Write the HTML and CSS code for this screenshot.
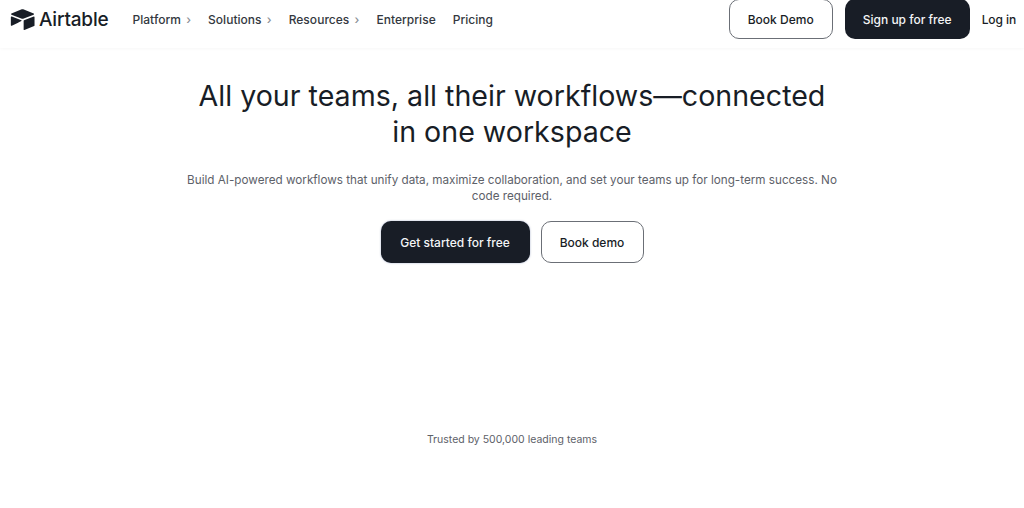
FILE: index.html
```html
<!DOCTYPE html>
<html lang="en">
<head>
    <title>Airtable</title>
    <meta charset="utf-8" />
    <link rel="stylesheet" href="styles.css">
</head>
<body>
<header class="topbar">
    <a class="logo" href="#">
        <svg class="logo-mark" viewBox="0 0 26 22" width="25" height="21">
            <path d="M11.6 0.6 1.4 4.8c-.5.2-.5.9 0 1.1l10.3 4.1c.9.4 1.8.4 2.7 0l10.3-4.1c.5-.2.5-.9 0-1.1L14.4.6c-.9-.4-1.9-.4-2.8 0z" fill="#181d26"/>
            <path d="M14.2 12.4v9c0 .4.4.7.8.5l10.2-4c.3-.1.4-.3.4-.6v-9c0-.4-.4-.7-.8-.5l-10.2 4c-.3.1-.4.3-.4.6z" fill="#181d26"/>
            <path d="M11.8 12.7 8.7 14.2l-.3.2-6.6 3.2c-.4.2-1-.1-1-.6V8.5c0-.2.1-.3.2-.4l.3-.2c.2-.1.3-.1.5 0l10 4c.5.2.5.6 0 .8z" fill="#181d26"/>
        </svg>
        <span class="logo-text">Airtable</span>
    </a>
    <nav class="nav">
        <a class="nav-link" href="#">Platform <span class="chev">›</span></a>
        <a class="nav-link" href="#">Solutions <span class="chev">›</span></a>
        <a class="nav-link" href="#">Resources <span class="chev">›</span></a>
        <a class="nav-link" href="#">Enterprise</a>
        <a class="nav-link" href="#">Pricing</a>
    </nav>
    <div class="actions">
        <a class="btn btn-light btn-top" href="#">Book Demo</a>
        <a class="btn btn-dark btn-top" href="#">Sign up for free</a>
        <a class="login" href="#">Log in</a>
    </div>
</header>

<main class="hero">
    <h1>All your teams, all their workflows—connected in one workspace</h1>
    <p class="lead">Build AI-powered workflows that unify data, maximize collaboration, and set your teams up for long-term success. No code required.</p>
    <div class="cta">
        <a class="btn btn-dark btn-big" href="#">Get started for free</a>
        <a class="btn btn-light btn-big" href="#">Book demo</a>
    </div>
    <p class="trusted">Trusted by 500,000 leading teams</p>
</main>
</body>
</html>
```

FILE: styles.css
```css
body {
    margin: 0;
    height: 508px;
    overflow: hidden;
    font-family: Inter, "Liberation Sans", sans-serif;
    background: #fff;
    color: #181d26;
}
a {
    color: inherit;
    text-decoration: none;
}

.topbar {
    display: flex;
    align-items: center;
    height: 48px;
    box-sizing: border-box;
    padding: 0 8px 10px 10px;
    background: #fff;
    box-shadow: 0 1px 3px rgba(0,0,0,0.03);
}
.logo {
    display: flex;
    align-items: center;
    gap: 4px;
}
.logo-text {
    font-size: 19px;
    font-weight: 500;
    letter-spacing: -0.2px;
}
.nav {
    display: flex;
    gap: 17px;
    margin-left: 24px;
}
.nav-link {
    font-size: 12px;
    font-weight: 500;
    letter-spacing: 0.03px;
    color: #333840;
}
.chev {
    color: #8a8e94;
    font-size: 12px;
    margin-left: 2px;
}
.actions {
    display: flex;
    align-items: center;
    margin-left: auto;
}
.login {
    font-size: 12px;
    font-weight: 500;
    letter-spacing: -0.1px;
    margin-left: 12px;
}

.btn {
    display: flex;
    align-items: center;
    justify-content: center;
    box-sizing: border-box;
    font-size: 12px;
    font-weight: 500;
    border-radius: 10px;
}
.btn-light {
    background: #fff;
    border: 1px solid #6b6f76;
    color: #181d26;
}
.btn-dark {
    background: #181d26;
    color: #f4f5f6;
}
.btn-top {
    height: 40px;
}
.btn-top.btn-light {
    width: 104px;
    margin-right: 12px;
}
.btn-top.btn-dark {
    width: 125px;
}

.hero {
    display: flex;
    flex-direction: column;
    align-items: center;
    padding-top: 30px;
}
h1 {
    width: 640px;
    margin: 0;
    font-size: 28.6px;
    line-height: 36px;
    font-weight: 400;
    text-align: center;
    color: #181d26;
}
.lead {
    width: 660px;
    margin: 22px 0 0;
    font-size: 11.7px;
    line-height: 16px;
    text-align: center;
    color: #5d6169;
}
.cta {
    display: flex;
    gap: 11px;
    margin-top: 17px;
}
.btn-big {
    height: 42px;
}
.btn-big.btn-dark {
    width: 149px;
    box-shadow: 0 0 2px rgba(60,80,140,0.5);
}
.btn-big.btn-light {
    width: 103px;
}
.trusted {
    margin: 170px 0 0;
    font-size: 10.5px;
    color: #5d6169;
}
```
